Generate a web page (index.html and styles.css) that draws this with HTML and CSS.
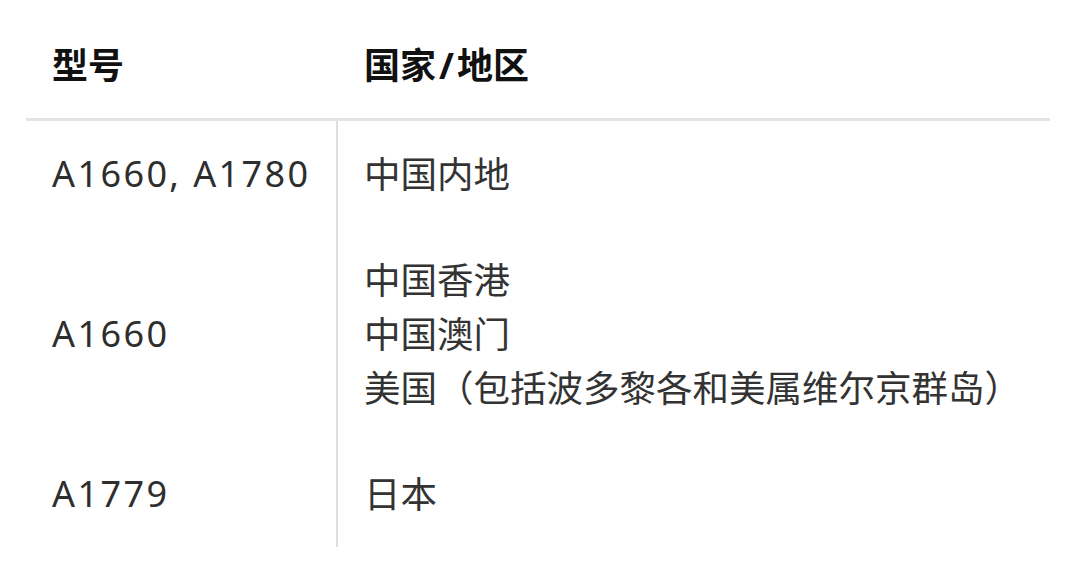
FILE: index.html
```html
<!DOCTYPE html>
<html lang="zh-CN">
<head>
<meta charset="utf-8">
<title>型号</title>
<link rel="stylesheet" href="styles.css">
</head>
<body>
<div class="wrap">
  <table class="models">
    <thead>
      <tr>
        <th class="col-model">型号</th>
        <th class="col-region">国家<span class="slash">/</span>地区</th>
      </tr>
    </thead>
    <tbody>
      <tr>
        <td class="model">A1660, A1780</td>
        <td class="region">中国内地</td>
      </tr>
      <tr>
        <td class="model">A1660</td>
        <td class="region">中国香港<br>中国澳门<br>美国（包括波多黎各和美属维尔京群岛）</td>
      </tr>
      <tr>
        <td class="model">A1779</td>
        <td class="region">日本</td>
      </tr>
    </tbody>
  </table>
</div>
</body>
</html>
```

FILE: styles.css
```css
html, body {
  margin: 0;
  padding: 0;
  background: #ffffff;
}

body {
  font-family: "Noto Sans", "Noto Sans CJK SC", sans-serif;
  font-size: 36px;
  line-height: 54px;
  color: #333333;
}

.wrap {
  padding-left: 26px;
}

.models {
  width: 1024px;
  border-collapse: collapse;
  table-layout: fixed;
}

.models th {
  text-align: left;
  font-weight: 700;
  color: #111111;
  padding: 39px 26px 25px 26px;
  border-bottom: 3px solid #e4e4e4;
}

.models th.col-model {
  width: 259px;
}

.models th.col-region {
  padding-left: 27px;
}

.slash {
  margin: 0 3px;
}

.models td {
  padding: 26px;
  vertical-align: middle;
}

.models td.model {
  letter-spacing: 2.4px;
  white-space: nowrap;
  color: #2e2e2e;
}

.models td.region {
  font-size: 36.5px;
  border-left: 2px solid #dedede;
}
```
